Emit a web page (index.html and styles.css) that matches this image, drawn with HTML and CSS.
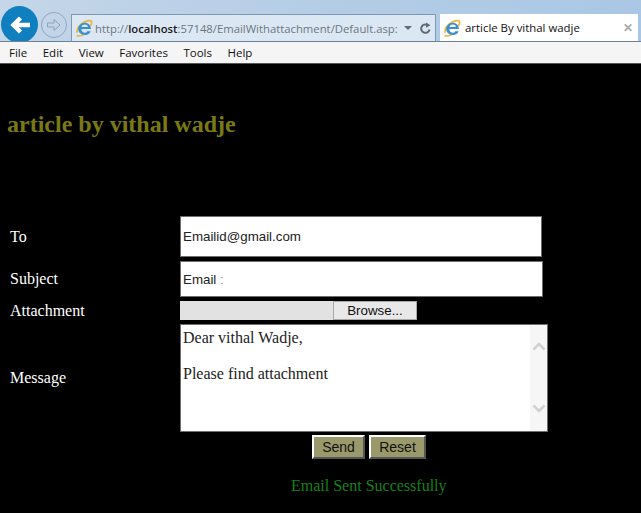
FILE: index.html

```html
<!DOCTYPE html>
<html lang="en">
<head>
  <meta charset="UTF-8">
  <title>article By vithal wadje</title>
  <link rel="stylesheet" href="styles.css">
</head>
<body>
  <div class="toolbar">
    <div class="back">
      <svg width="24" height="24" viewBox="0 0 24 24"><path d="M22 12H5M12.500 5L5.500 12L12.500 19" fill="none" stroke="#fff" stroke-width="4.500"/></svg>
    </div>
    <div class="forward">
      <svg width="16" height="16" viewBox="0 0 16 16"><path d="M1.500 6H8V2.500L14 8L8 13.500V10H1.500Z" fill="none" stroke="#8ea3b5" stroke-width="1"/></svg>
    </div>
    <div class="address">
      <svg class="ie" width="18" height="18" viewBox="0 0 17 17"><use href="#ie-logo"/></svg>
      <span class="url">http://<b>localhost</b>:57148/EmailWithattachment/Default.asp:</span>
      <span class="caret"></span>
      <svg width="13" height="13" viewBox="0 0 13 13"><path d="M10.500 7.500A4.200 4.200 0 1 1 8.500 3" fill="none" stroke="#5f6b76" stroke-width="2"/><path d="M7 .5L11.500 3.200L7 5.800Z" fill="#5f6b76"/></svg>
    </div>
    <div class="tab">
      <svg class="ie" width="18" height="18" viewBox="0 0 17 17">
        <g id="ie-logo">
          <path d="M2 13C1 8 8 1 15 1.500C16.500 3 15.500 5 14.500 6.500" fill="none" stroke="#e8b93a" stroke-width="1.600"/>
          <path d="M1.500 15.500C4 17 7 15.500 9 14.500" fill="none" stroke="#e8b93a" stroke-width="1.600"/>
          <path d="M6 9.500H15C15 5.500 12 3.500 9.500 3.500C5.500 3.500 3 6.500 3 9.500C3 13 6 15 9.500 15C12 15 14 14 14.800 11.500H11.500C11 12.500 10.500 13 9.500 13C7.500 13 6 11.500 6 9.500ZM6.200 7.500C6.500 6 8 5.300 9.300 5.300C10.800 5.300 12 6 12.200 7.500Z" fill="#3b8fd0" fill-rule="evenodd"/>
        </g>
      </svg>
      <span class="tab-title">article By vithal wadje</span>
      <span class="tab-close">✕</span>
    </div>
  </div>
  <div class="menubar">
    <span>File</span>
    <span>Edit</span>
    <span>View</span>
    <span>Favorites</span>
    <span>Tools</span>
    <span>Help</span>
  </div>

  <div class="page">
    <h2>article by vithal wadje</h2>

    <div class="form">
      <label class="row-to">To</label>
      <div class="field field-to">Emailid@gmail.com</div>

      <label class="row-subject">Subject</label>
      <div class="field field-subject">Email <span class="smudge">:</span></div>

      <label class="row-attach">Attachment</label>
      <div class="file">
        <div class="file-name"></div>
        <div class="file-btn">Browse...</div>
      </div>

      <label class="row-message">Message</label>
      <div class="message">
        <div class="message-text">
          <p>Dear vithal Wadje,</p>
          <p>Please find attachment</p>
        </div>
        <div class="scroll">
          <svg width="14" height="9" viewBox="0 0 14 9"><path d="M1.500 7.500L7 2L12.500 7.500" fill="none" stroke="#d0d0d0" stroke-width="2.500"/></svg>
          <svg width="14" height="9" viewBox="0 0 14 9"><path d="M1.500 1.500L7 7L12.500 1.500" fill="none" stroke="#d0d0d0" stroke-width="2.500"/></svg>
        </div>
      </div>
    </div>

    <div class="actions">
      <button class="btn btn-send">Send</button>
      <button class="btn btn-reset">Reset</button>
    </div>
    <p class="status">Email Sent Successfully</p>
  </div>
</body>
</html>
```

FILE: styles.css

```css
html, body { margin: 0; padding: 0; background: #000; }
body { width: 641px; height: 513px; overflow: hidden; font-family: "Liberation Serif", serif; }

.toolbar { height: 41px; display: flex; align-items: flex-end; overflow: hidden; background: linear-gradient(100deg, #c5d6e8 0%, #b4cde6 50%, #a9c7e4 100%); border-bottom: 1px solid #6d8299; font-family: "Open Sans", sans-serif; }
.back { width: 37px; height: 37px; margin: 0 0 -2px 1px; border-radius: 50%; background: #0f7fc0; display: flex; align-items: center; justify-content: center; flex: none; }
.forward { box-sizing: border-box; width: 26px; height: 26px; margin: 0 4px 3px 3px; border: 1px solid #8ea9c2; border-radius: 50%; display: flex; align-items: center; justify-content: center; flex: none; }
.address { width: 363px; height: 26px; display: flex; align-items: center; background: #dbe7f3; border: 1px solid #7f99b3; border-bottom: 0; box-sizing: content-box; flex: none; }
.ie { flex: none; margin-left: 3px; }
.url { width: 303px; margin-left: 2px; font-size: 11.300px; color: #6b7782; white-space: nowrap; }
.url b { font-weight: 600; color: #1b1b1b; }
.caret { width: 0; height: 0; margin: 0 7px 0 6px; border: 4px solid transparent; border-top: 4px solid #5f6b76; border-bottom: 0; }
.tab { width: 198px; height: 27px; margin-left: 4px; display: flex; align-items: center; background: #fff; flex: none; }
.tab-title { margin-left: 4px; font-size: 11.400px; color: #111; flex: 1; white-space: nowrap; }
.tab-close { margin-right: 5px; font-size: 12px; font-weight: 700; color: #a9a9a9; }

.menubar { height: 21px; display: flex; align-items: center; gap: 15.500px; padding-left: 9px; background: #f5f5f5; border-bottom: 1px solid #555; font-family: "Open Sans", sans-serif; font-size: 11.500px; color: #111; }

.page { color: #fff; }
h2 { margin: 0; padding: 47px 0 0 7px; height: 105px; box-sizing: content-box; font-size: 24px; line-height: 27px; font-weight: bold; color: #7a7a14; }

.form { display: grid; grid-template-columns: 170px auto; margin-left: 10px; row-gap: 4px; align-items: center; justify-content: start; }
label { font-size: 16px; line-height: 18px; }
.field { box-sizing: border-box; background: #fff; border: 1px solid #6e6e6e; padding-left: 2px; font-family: "Liberation Sans", sans-serif; font-size: 13.330px; color: #222; display: flex; align-items: center; white-space: pre; }
.field-to { width: 362px; height: 41px; }
.field-subject { width: 363px; height: 36px; }
.smudge { color: #999; }

.file { display: flex; height: 19px; font-family: "Liberation Sans", sans-serif; font-size: 13.330px; }
.file-name { width: 153px; background: #e2e2e2; }
.file-btn { box-sizing: border-box; width: 84px; background: #e8e8e8; border: 1px solid #a8a8a8; color: #111; text-align: center; line-height: 17px; }

.message { box-sizing: border-box; width: 368px; height: 108px; display: flex; background: #fff; border: 1px solid #6e6e6e; color: #222; font-size: 16px; }
.message-text { flex: 1; padding: 4px 2px 0; }
.message-text p { margin: 0 0 18px; line-height: 18px; }
.scroll { width: 17px; background: #f6f6f6; display: flex; flex-direction: column; justify-content: space-between; align-items: center; padding: 17px 0 18px; box-sizing: border-box; }

.actions { display: flex; gap: 4px; margin: 3px 0 0 312px; }
.btn { box-sizing: border-box; height: 24px; padding: 0; background: #99996b; border: 2px solid; border-color: #fff #555 #555 #fff; font-family: "Liberation Sans", sans-serif; font-size: 14px; color: #111; }
.btn-send { width: 53px; }
.btn-reset { width: 57px; }

.status { margin: 18px 0 0 291px; font-size: 16px; line-height: 18px; color: #178017; }
```
